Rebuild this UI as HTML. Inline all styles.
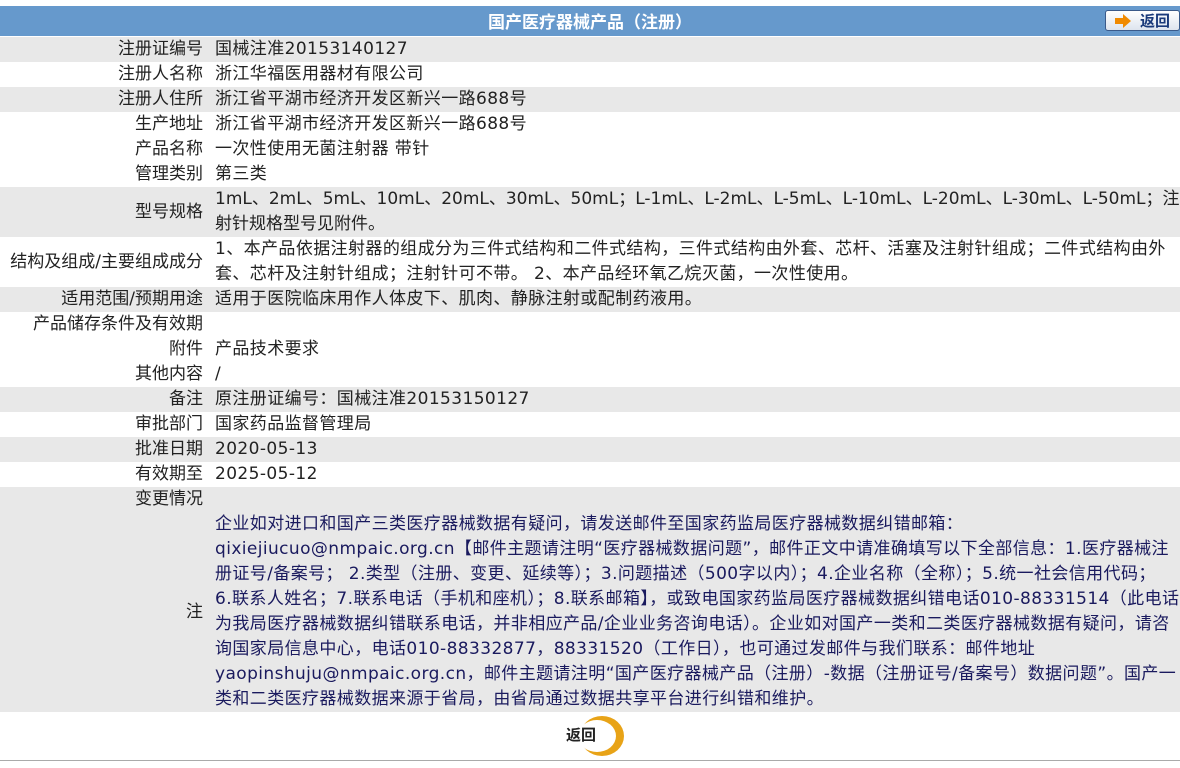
<!DOCTYPE html>
<html><head><meta charset="utf-8"><style>
body{margin:0;width:1180px;height:768px;overflow:hidden;background:#fff;font-family:"DejaVu Sans","Noto Sans CJK SC",sans-serif;font-size:17px;color:#222;}
.hd{position:absolute;left:0;top:6px;width:1180px;height:30px;background:#6699cc;color:#fff;font-weight:bold;text-align:center;line-height:30px;font-size:17px;font-family:"Noto Sans CJK SC",sans-serif;}
.btn{position:absolute;left:1105px;top:10px;width:75px;height:21px;background:linear-gradient(#fff,#dde4ee);border:1px solid #3a5a8a;border-radius:3px;box-sizing:border-box;font-size:15px;font-weight:bold;color:#1a3a7a;line-height:19px;font-family:"Noto Sans CJK SC",sans-serif;}
.r{position:absolute;left:0;width:1180px;overflow:hidden;white-space:nowrap;}
.g{background:#e8e8e8;}
.l{position:absolute;right:977px;text-align:right;}
.v{position:absolute;left:215px;line-height:25px;letter-spacing:0.4px;}
.n{color:#1a1a5e;}
</style></head><body>
<div class="hd">国产医疗器械产品（注册）</div>
<div class="btn"><svg style="position:absolute;left:8px;top:3px" width="18" height="14"><path d="M1 4h8V0l8 7-8 7V10H1z" fill="#f08a00"/></svg><span style="position:absolute;left:34px;top:0">返回</span></div>

<div class="r g" style="top:37px;height:25px"><div class="l" style="line-height:25px">注册证编号</div><div class="v">国械注准20153140127</div></div>
<div class="r" style="top:62px;height:25px"><div class="l" style="line-height:25px">注册人名称</div><div class="v">浙江华福医用器材有限公司</div></div>
<div class="r g" style="top:87px;height:25px"><div class="l" style="line-height:25px">注册人住所</div><div class="v">浙江省平湖市经济开发区新兴一路688号</div></div>
<div class="r" style="top:112px;height:25px"><div class="l" style="line-height:25px">生产地址</div><div class="v">浙江省平湖市经济开发区新兴一路688号</div></div>
<div class="r" style="top:137px;height:25px"><div class="l" style="line-height:25px">产品名称</div><div class="v">一次性使用无菌注射器 带针</div></div>
<div class="r" style="top:162px;height:25px"><div class="l" style="line-height:25px">管理类别</div><div class="v">第三类</div></div>
<div class="r g" style="top:187px;height:50px"><div class="l" style="line-height:50px">型号规格</div><div class="v" style="letter-spacing:0">1mL、2mL、5mL、10mL、20mL、30mL、50mL；L-1mL、L-2mL、L-5mL、L-10mL、L-20mL、L-30mL、L-50mL；注<br>射针规格型号见附件。</div></div>
<div class="r" style="top:237px;height:50px"><div class="l" style="line-height:50px">结构及组成/主要组成成分</div><div class="v">1、本产品依据注射器的组成分为三件式结构和二件式结构，三件式结构由外套、芯杆、活塞及注射针组成；二件式结构由外<br>套、芯杆及注射针组成；注射针可不带。 2、本产品经环氧乙烷灭菌，一次性使用。</div></div>
<div class="r g" style="top:287px;height:25px"><div class="l" style="line-height:25px">适用范围/预期用途</div><div class="v">适用于医院临床用作人体皮下、肌肉、静脉注射或配制药液用。</div></div>
<div class="r" style="top:312px;height:25px"><div class="l" style="line-height:25px">产品储存条件及有效期</div></div>
<div class="r" style="top:337px;height:25px"><div class="l" style="line-height:25px">附件</div><div class="v">产品技术要求</div></div>
<div class="r" style="top:362px;height:25px"><div class="l" style="line-height:25px">其他内容</div><div class="v">/</div></div>
<div class="r g" style="top:387px;height:25px"><div class="l" style="line-height:25px">备注</div><div class="v">原注册证编号：国械注准20153150127</div></div>
<div class="r" style="top:412px;height:25px"><div class="l" style="line-height:25px">审批部门</div><div class="v">国家药品监督管理局</div></div>
<div class="r g" style="top:437px;height:25px"><div class="l" style="line-height:25px">批准日期</div><div class="v">2020-05-13</div></div>
<div class="r" style="top:462px;height:25px"><div class="l" style="line-height:25px">有效期至</div><div class="v">2025-05-12</div></div>
<div class="r g" style="top:487px;height:25px"><div class="l" style="line-height:25px">变更情况</div></div>
<div class="r g" style="top:512px;height:200px"><div class="l" style="line-height:200px">注</div><div class="v n">企业如对进口和国产三类医疗器械数据有疑问，请发送邮件至国家药监局医疗器械数据纠错邮箱：<br>qixiejiucuo@nmpaic.org.cn【邮件主题请注明“医疗器械数据问题”，邮件正文中请准确填写以下全部信息：1.医疗器械注<br>册证号/备案号； 2.类型（注册、变更、延续等）；3.问题描述（500字以内）；4.企业名称（全称）；5.统一社会信用代码；<br>6.联系人姓名；7.联系电话（手机和座机）；8.联系邮箱】，或致电国家药监局医疗器械数据纠错电话010-88331514（此电话<br>为我局医疗器械数据纠错联系电话，并非相应产品/企业业务咨询电话）。企业如对国产一类和二类医疗器械数据有疑问，请咨<br>询国家局信息中心，电话010-88332877，88331520（工作日），也可通过发邮件与我们联系：邮件地址<br>yaopinshuju@nmpaic.org.cn，邮件主题请注明“国产医疗器械产品（注册）-数据（注册证号/备案号）数据问题”。国产一<br>类和二类医疗器械数据来源于省局，由省局通过数据共享平台进行纠错和维护。</div></div>

<div style="position:absolute;left:580px;top:716px;width:44px;height:40px;border-radius:50%;background:#e8a317;"></div>
<div style="position:absolute;left:578px;top:720px;width:38px;height:32px;border-radius:50%;background:#fff;"></div>
<div style="position:absolute;left:566px;top:724px;font-weight:bold;font-size:15px;color:#222;font-family:'Noto Sans CJK SC',sans-serif;">返回</div>
<div style="position:absolute;left:0;top:760px;width:1180px;height:1px;background:#aaa;"></div>
</body></html>
